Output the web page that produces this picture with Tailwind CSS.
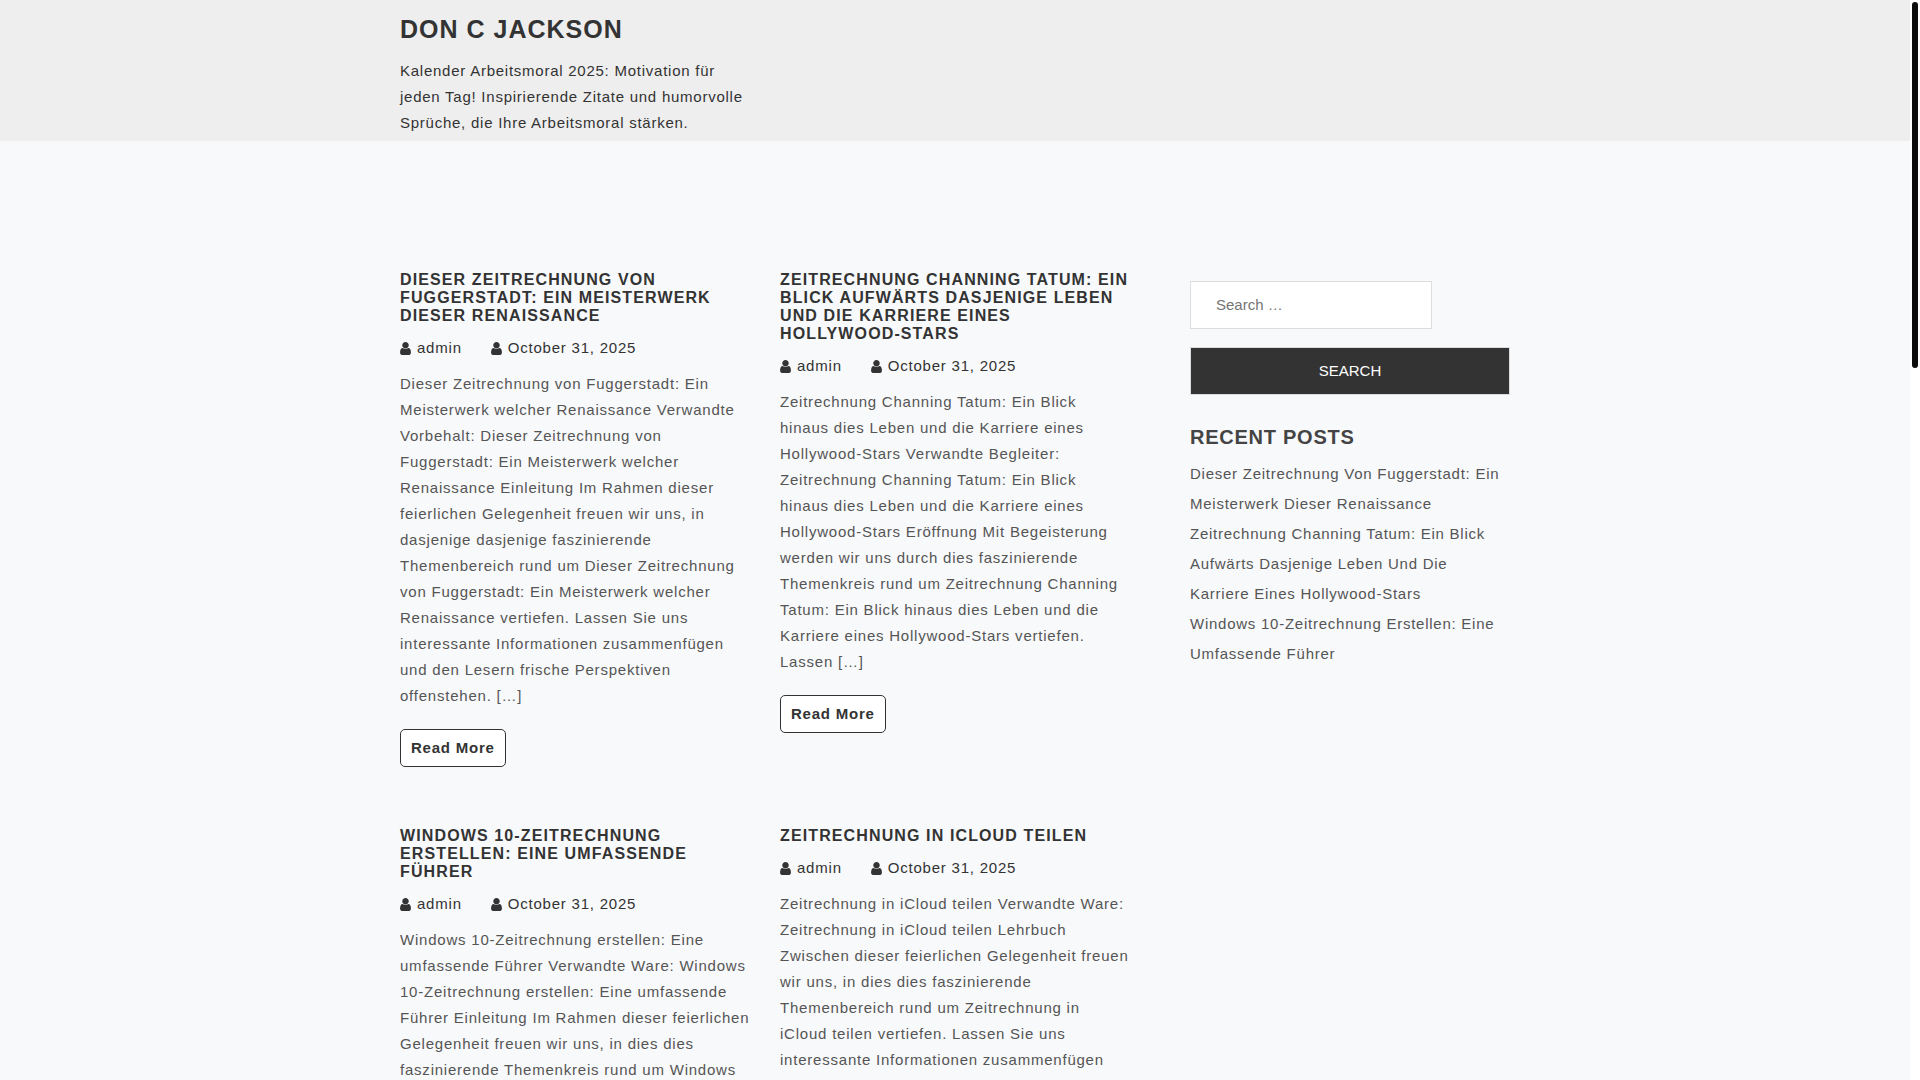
<!DOCTYPE html>
<html lang="de">
<head>
  <meta charset="UTF-8" />
  <title>Don C Jackson</title>
  <meta name="viewport" content="width=device-width, initial-scale=1" />
  <script src="https://cdn.jsdelivr.net/npm/@tailwindcss/browser@4"></script>
</head>
<body class="flex h-screen overflow-hidden bg-[#f8f9fb] font-['Liberation_Sans',Arial,sans-serif] text-[15px] leading-[26px] tracking-wider text-[#555]">

  <!-- user icon, shared by all post metas -->
  <svg class="hidden">
    <symbol id="user" viewBox="0 128 1280 1536">
      <path d="M1280 1399q0 109-62.5 187t-150.5 78h-854q-88 0-150.5-78t-62.5-187q0-85 8.5-160.5t31.5-152 58.5-131 94-89 134.5-34.5q131 128 313 128t313-128q76 0 134.5 34.5t94 89 58.5 131 31.5 152 8.5 160.5zm-256-887q0 159-112.5 271.5t-271.5 112.5-271.5-112.5-112.5-271.5 112.5-271.5 271.5-112.5 271.5 112.5 112.5 271.5z" />
    </symbol>
  </svg>

  <div class="min-w-0 flex-1 overflow-hidden">

    <!-- ===== Header ===== -->
    <header class="bg-[#eee] pt-4 pb-[5px] text-[#333]">
      <div class="mx-auto max-w-[1140px] px-[15px]">
        <div class="max-w-[350px]">
          <h1 class="mb-[15px] text-[25px] leading-[27px] font-bold tracking-[1px] uppercase"><a href="#">Don C Jackson</a></h1>
          <p>Kalender Arbeitsmoral 2025: Motivation für jeden Tag! Inspirierende Zitate und humorvolle Sprüche, die Ihre Arbeitsmoral stärken.</p>
        </div>
      </div>
    </header>

    <div class="mx-auto flex max-w-[1140px] gap-[60px] px-[15px] pt-[130px]">

      <!-- ===== Posts ===== -->
      <main class="grid flex-1 grid-cols-2 gap-x-[30px] gap-y-[60px] tracking-[0.052em]">
        <article>
          <h2 class="text-[16px] leading-[18px] font-bold tracking-[0.07em] text-[#333] uppercase"><a href="#">Dieser Zeitrechnung von Fuggerstadt: Ein Meisterwerk dieser Renaissance</a></h2>
          <div class="my-[10px] flex gap-[29px] text-[#333]">
            <a href="#" class="flex items-center gap-[6px]"><svg class="h-[13px] w-[11px] fill-current"><use href="#user" /></svg>admin</a>
            <a href="#" class="flex items-center gap-[6px]"><svg class="h-[13px] w-[11px] fill-current"><use href="#user" /></svg>October 31, 2025</a>
          </div>
          <p class="mb-5">Dieser Zeitrechnung von Fuggerstadt: Ein Meisterwerk welcher Renaissance Verwandte Vorbehalt: Dieser Zeitrechnung von Fuggerstadt: Ein Meisterwerk welcher Renaissance Einleitung Im Rahmen dieser feierlichen Gelegenheit freuen wir uns, in dasjenige dasjenige faszinierende Themenbereich rund um Dieser Zeitrechnung von Fuggerstadt: Ein Meisterwerk welcher Renaissance vertiefen. Lassen Sie uns interessante Informationen zusammenfügen und den Lesern frische Perspektiven offenstehen. […]</p>
          <a href="#" class="inline-block rounded-[5px] border border-[#333] bg-white px-[10px] py-[5px] align-top font-bold text-[#333]">Read More</a>
        </article>

        <article>
          <h2 class="text-[16px] leading-[18px] font-bold tracking-[0.07em] text-[#333] uppercase"><a href="#">Zeitrechnung Channing Tatum: Ein Blick aufwärts dasjenige Leben und die Karriere eines Hollywood-Stars</a></h2>
          <div class="my-[10px] flex gap-[29px] text-[#333]">
            <a href="#" class="flex items-center gap-[6px]"><svg class="h-[13px] w-[11px] fill-current"><use href="#user" /></svg>admin</a>
            <a href="#" class="flex items-center gap-[6px]"><svg class="h-[13px] w-[11px] fill-current"><use href="#user" /></svg>October 31, 2025</a>
          </div>
          <p class="mb-5">Zeitrechnung Channing Tatum: Ein Blick<br> hinaus dies Leben und die Karriere eines Hollywood-Stars Verwandte Begleiter: Zeitrechnung Channing Tatum: Ein Blick<br> hinaus dies Leben und die Karriere eines Hollywood-Stars Eröffnung Mit Begeisterung werden wir uns durch dies faszinierende Themenkreis rund um Zeitrechnung Channing Tatum: Ein Blick hinaus dies Leben und die Karriere eines Hollywood-Stars vertiefen. Lassen […]</p>
          <a href="#" class="inline-block rounded-[5px] border border-[#333] bg-white px-[10px] py-[5px] align-top font-bold text-[#333]">Read More</a>
        </article>

        <article>
          <h2 class="text-[16px] leading-[18px] font-bold tracking-[0.07em] text-[#333] uppercase"><a href="#">Windows 10-Zeitrechnung erstellen: Eine umfassende Führer</a></h2>
          <div class="my-[10px] flex gap-[29px] text-[#333]">
            <a href="#" class="flex items-center gap-[6px]"><svg class="h-[13px] w-[11px] fill-current"><use href="#user" /></svg>admin</a>
            <a href="#" class="flex items-center gap-[6px]"><svg class="h-[13px] w-[11px] fill-current"><use href="#user" /></svg>October 31, 2025</a>
          </div>
          <p>Windows 10-Zeitrechnung erstellen: Eine umfassende Führer Verwandte Ware: Windows 10-Zeitrechnung erstellen: Eine umfassende Führer Einleitung Im Rahmen dieser feierlichen Gelegenheit freuen wir uns, in dies dies faszinierende Themenkreis rund um Windows</p>
        </article>

        <article>
          <h2 class="text-[16px] leading-[18px] font-bold tracking-[0.07em] text-[#333] uppercase"><a href="#">Zeitrechnung in iCloud teilen</a></h2>
          <div class="my-[10px] flex gap-[29px] text-[#333]">
            <a href="#" class="flex items-center gap-[6px]"><svg class="h-[13px] w-[11px] fill-current"><use href="#user" /></svg>admin</a>
            <a href="#" class="flex items-center gap-[6px]"><svg class="h-[13px] w-[11px] fill-current"><use href="#user" /></svg>October 31, 2025</a>
          </div>
          <p>Zeitrechnung in iCloud teilen Verwandte Ware: Zeitrechnung in iCloud teilen Lehrbuch Zwischen dieser feierlichen Gelegenheit freuen wir uns, in dies dies faszinierende Themenbereich rund um Zeitrechnung in iCloud teilen vertiefen. Lassen Sie uns interessante Informationen zusammenfügen</p>
        </article>
      </main>

      <!-- ===== Sidebar ===== -->
      <aside class="w-[320px] pt-[10px]">
        <form>
          <input type="search" aria-label="Search" placeholder="Search …" class="block h-12 w-[242px] border border-[#ddd] bg-white px-[25px] pb-[2px] tracking-normal placeholder:text-[#757575]" />
          <button type="button" class="mt-[18px] block h-12 w-full border border-[#ddd] bg-[#333] tracking-normal text-white uppercase">Search</button>
        </form>
        <h2 class="mt-[31px] mb-[11px] text-[20px] leading-[22px] font-bold text-[#444] uppercase">Recent Posts</h2>
        <ul class="leading-[30px] capitalize">
          <li><a href="#">Dieser Zeitrechnung von Fuggerstadt: Ein Meisterwerk dieser Renaissance</a></li>
          <li><a href="#">Zeitrechnung Channing Tatum: Ein Blick aufwärts dasjenige Leben und die Karriere eines Hollywood-Stars</a></li>
          <li><a href="#">Windows 10-Zeitrechnung erstellen: Eine umfassende Führer</a></li>
        </ul>
      </aside>
    </div>
  </div>

  <!-- scroll track -->
  <div class="w-[10px] shrink-0 bg-white p-[2px]">
    <div class="h-[34%] rounded-full bg-[#0c0c0c]"></div>
  </div>

</body>
</html>
